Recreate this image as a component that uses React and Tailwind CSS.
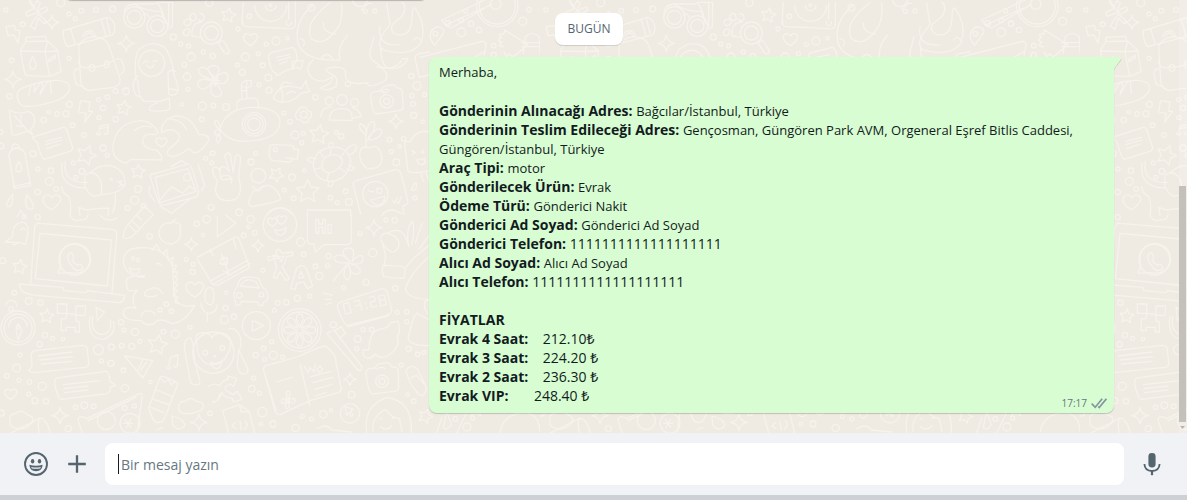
const dots = [
  [18, 30, 6], [182, 8, 12], [68, 73, 7], [207, 42, 6], [226, 56, 6], [244, 32, 7], [288, 30, 7], [338, 27, 9], [207, 175, 6], [35, 181, 7],
  [28, 289, 8], [347, 273, 7], [378, 274, 10], [322, 292, 7], [296, 299, 6], [208, 313, 9], [309, 324, 8], [146, 336, 5], [171, 342, 7], [198, 341, 9],
  [131, 360, 8], [218, 376, 7], [297, 353, 6], [347, 358, 8], [252, 405, 7], [309, 444, 9], [322, 466, 6], [99, 461, 9], [114, 507, 6], [153, 512, 8],
  [148, 544, 12], [113, 576, 8], [169, 567, 7], [220, 489, 6], [246, 514, 9], [227, 532, 6], [2, 438, 9], [2, 396, 7], [520, 111, 9], [542, 132, 6],
  [566, 138, 6], [573, 171, 12], [610, 156, 6], [638, 168, 8], [553, 194, 7], [561, 230, 11], [564, 268, 6], [547, 313, 5], [607, 318, 12], [640, 317, 7],
  [678, 321, 10], [605, 358, 7], [628, 8, 11], [748, 49, 7], [714, 87, 6], [799, 133, 6], [828, 123, 12], [863, 115, 5], [736, 171, 12], [775, 161, 6],
  [712, 195, 6], [727, 217, 9], [788, 196, 7], [805, 233, 10], [777, 254, 6], [807, 271, 9], [851, 339, 6], [870, 365, 7], [885, 405, 12], [910, 400, 6],
  [905, 428, 6], [946, 292, 8], [1044, 252, 8], [1009, 397, 6], [1024, 409, 8], [638, 460, 7], [617, 475, 6], [635, 489, 6], [767, 460, 6], [753, 486, 9],
  [876, 532, 10], [913, 512, 5], [853, 570, 6], [881, 595, 7], [414, 567, 10], [404, 601, 12], [430, 617, 7], [383, 624, 7], [633, 622, 9], [717, 637, 10],
  [991, 593, 7], [1012, 608, 6], [1037, 574, 7], [1047, 606, 10], [934, 23, 10], [1096, 34, 6], [1125, 33, 6], [1234, 228, 8], [1251, 257, 12], [1236, 287, 7],
  [1274, 284, 6], [1239, 312, 7], [1241, 346, 9], [1268, 365, 5], [1169, 419, 7], [1199, 439, 5], [1211, 416, 7], [1174, 455, 6], [1189, 487, 10], [1245, 594, 6],
  [1343, 70, 8], [1384, 61, 7], [1413, 71, 8], [1437, 90, 8], [1384, 97, 13], [1397, 33, 6], [1568, 64, 12], [1587, 29, 7], [1481, 137, 7], [1481, 165, 8],
  [73, 650, 6], [113, 651, 8], [8, 782, 9], [43, 878, 7], [86, 903, 10], [121, 908, 8], [363, 967, 8], [372, 990, 6], [405, 996, 11], [135, 1005, 8],
  [158, 1015, 6], [189, 1017, 5], [119, 1033, 8], [60, 1065, 6], [50, 1104, 12], [295, 1049, 15], [334, 1041, 9], [365, 1037, 7], [395, 1039, 9], [419, 1024, 6],
  [304, 1083, 6], [333, 1090, 9], [370, 1111, 7], [375, 1165, 11], [451, 1146, 5], [20, 1127, 7], [57, 1141, 6], [88, 1146, 7], [127, 1159, 12], [86, 1182, 6],
  [105, 1202, 9], [138, 1204, 8], [227, 1222, 7], [253, 1216, 10], [281, 1219, 7], [205, 1286, 9], [590, 671, 8], [620, 658, 11], [609, 705, 5], [449, 709, 8],
  [559, 778, 6], [579, 793, 6], [578, 816, 8], [752, 658, 11], [745, 681, 5], [731, 706, 7], [764, 698, 7], [902, 726, 12], [911, 763, 7], [789, 811, 6],
  [946, 799, 7], [958, 828, 11], [986, 768, 8], [983, 797, 6], [1118, 758, 12], [1080, 701, 6], [1158, 660, 6], [1184, 661, 8], [679, 878, 5], [677, 924, 8],
  [702, 950, 8], [673, 959, 12], [570, 982, 6], [499, 913, 7], [480, 930, 6], [514, 934, 7], [490, 995, 7], [526, 1003, 12], [833, 909, 7], [859, 907, 8],
  [892, 895, 9], [930, 888, 6], [823, 931, 6], [815, 1025, 6], [791, 1045, 7], [767, 1065, 8], [794, 1078, 6], [820, 1066, 12], [848, 1071, 6], [1031, 863, 6],
  [1098, 847, 9], [1186, 865, 8], [1192, 937, 6], [1220, 935, 7], [1220, 965, 6], [1000, 974, 9], [1089, 989, 6], [1115, 989, 7], [1073, 1017, 10], [1070, 1046, 6],
  [1226, 1047, 8], [1253, 1063, 7], [1272, 1057, 6], [1204, 1095, 6], [761, 1134, 6], [755, 1166, 10], [778, 1180, 6], [787, 1236, 14], [630, 1240, 7], [819, 1272, 9],
  [783, 1272, 5], [887, 1284, 11], [907, 1249, 6], [935, 1257, 6], [970, 1243, 11], [993, 1231, 5], [1055, 1184, 10], [1223, 1184, 5], [1241, 1204, 7], [4, 1239, 9],
  [1366, 1257, 7], [1401, 1281, 12], [1418, 1254, 6],
];

const stars = [
  [371, 324, 23, 10], [259, 466, 31, 20], [414, 515, 22, 5], [685, 46, 23, 10], [957, 404, 30, 8], [923, 575, 36, 0], [829, 524, 23, 30],
  [59, 801, 23, 10], [140, 949, 22, 5], [473, 1035, 31, 10], [1276, 1249, 22, 20], [1428, 1228, 23, 0],
];

const sparkles = [
  [156, 67, 21], [379, 130, 25], [39, 238, 25], [1188, 364, 22], [574, 733, 20], [774, 737, 19], [1122, 683, 25], [180, 1247, 25], [597, 1267, 25], [1050, 1138, 19],
];

const hearts = [
  [752, 118, 21], [485, 427, 16], [156, 606, 26], [585, 868, 26], [33, 1182, 18], [845, 660, 15], [818, 666, 15],
];

const doodles = [
  // ribbon, lightning, milk carton, bread
  'M90 0l15 25-28 12 4 12 38-14-28 42 14 12 10-35 18 18 4-12-20-15 26-14-4-10-30 12 12-24-10-8-10 22-12-16z',
  'M18 80l26-4 2 14 14 3-6 36-12-24-18 2z',
  'M77 112l60-3 4 14-64 2zM77 125l-16 28 74 2 8-32 32 30-40 2 14 74 34-14-10-62M61 153l13 66q2 8 12 8l63 2M98 170q-18 34 0 37 20-3 0-37M146 178l20-12v8l-20 12z',
  'M52 290q-4-22 26-30 76-26 112-16 24 6 18 26-8 24-50 36-56 16-88 12-16-4-18-28M86 288l6-32q14-10 12 6l-2 16 16-26q12-10 10 4l-8 28 22-38q12-6 10 6l2 28',
  // backpack with bedroll
  'M190 92l132-40q20 4 23 30 0 22-12 24l-130 34q-14-12-13-48M212 86l14 48M304 60l14 48M320 58l10 44M250 110a18 18 0 0136 0M257 110a11 11 0 0122 0',
  'M236 138q10-22 40-27 42-4 52 30l32 94q4 24-24 28-40 4-66 8-26-2-28-30zM236 180q0 18 12 22 60 4 94-22M268 198l8-6 8 6v12l-8 6-8-6zM314 186l8-4 4 4v14l-8 4-4-4zM240 206q-20 0-18 16l6 30 18 8M348 178q18-6 22 18 8 20-8 26',
  // astronaut
  'M408 240q-8-90 16-96 32-24 66-4 24 20 32 86 18 40 10 52-16 14-26 4l-2-64q8-12 22-4M412 228q-14 12-12 38l8 20 12 4M414 240q0 52 18 64h50l26-10 2 30q-4 8-20 8-28 4-42-2-4-10 24-22v-4M506 266l26 4',
  'M430 190q6-12 14-4M460 186q6-8 12-2M440 196q12 16 22-2',
  // sunglasses
  'M372 36q4-22 30-24h60l14-5h42l-1 74-10 6M430 44q10-8 18 8M402 12q40 24 82 22l12 36q-10-50-24-60M506 10v70',
  // paw and magnifier
  'M576 108q-2-42 30-42M576 108l24 4M556 60q14-8 18 6-6 14-16 10-12-6-2-16M554 90q12-8 16 2-4 18-16 14-8-8 0-16M578 40q12 0 10 18-12 10-18-4-2-12 8-14M600 42q14-2 12 16-10 10-16 0M655 130q12-16 20 0l14 24q-8 14-16 4z',
  // record player
  'M726 72l4-64M886 6v70q-4 12-20 10l-126-6q-14 0-12-18M764 16a48 48 0 0096 0M796 16a16 16 0 0032 0M866 8v50M860 64a8 8 0 1014 2',
  // flower
  'M640 232q-32-32 0-36 30 2 6 36 40-30 38 4-6 22-38 12 34 38 6 42-26 0-18-40-26 30-40 8-8-24 38-20-46-14-34-32 20-14 42 26M622 240l38 2M640 226l6 32M630 254l24-22',
  // chat and fish
  'M806 172q0-12 8-14l62-16q12 0 16 34l-16 30-18 6-28 16-2-10q-16 0-22-46M830 172l38-8M832 182l38-10M838 192l24-8M876 184l34-2-8 26-10-6-14 4z',
  'M820 292q22-50 84-26l14-24 4 22 8 10-28 6q-20 28-60 26-20-4-22-14M840 262q14 24 6 42M836 272l14-26 24 4M860 282q14-14 26-4',
  // octopus
  'M940 14q-60 50-46 116 20 56 126 50-10-40 22-74M940 180q-30 24-4 54 30 20 60-4 8 20-36 34 20 12 48-4 10-30-18-40-24-12 4-18 50-6 42 26 4 30 68 20-6 20 44-2 34-20-24-60-24-18-10-46l8-30M990 8q-80 60-56 108 40 30 84-40 12-40 6-66M970 68q-2 30 36 34M900 116q20 4 10 22M964 178q14-28 34-2',
  'M1160 10l10 64q-50 58-20 76 80 22 112-20 20-50-16-104-10-10-10 30-4 60-50 46-30-20 18-50 20-30 2-46M1142 138q0 60 26 68 40 2 56-30l-16 0q-20 40-78 24M1140 80q-10 60 60 54M1240 120q10-16 26 4',
  // camera
  'M1112 290q0-12 10-14l20-4q2-12 22-16l18-2q8 10 10 10 12 0 14 8l4 50q-4 10-12 10l-70 10q-10 0-16-52M1144 274q18-12 22-2-8 10-22 2',
  'M1098 1124q0-16 10-18l18-2q4-14 20-14l20-2 10 14q16-4 18 8l2 54q-4 10-12 10l-66 8q-12 0-20-58M1130 1108q14-10 26-2',
  // submarine
  'M660 388q14-60 90-66 84-2 90 40 0 52-80 60-72 10-100-34M712 330q-6-30 12-32l40-4q12 4 12 28M726 294l-2-40q6-16 30-12v16l-16 8 4 30M724 260l18 2M728 272h14M740 242v16M644 364q12-10 18 26-16-8-18-26M644 394q14-12 18 4-16 16-18-4M654 430q14-14 4-26-16 14-4 26',
  // gear and people
  'M902 322l16 0 4 10 12 4 0 14-8 6-2 10-14 2-8-8-12-2-4-14 6-10z',
  'M988 360q0-34 36-34t32 36zM962 350q4-32 34-28M1058 322q20 6 26 28l-24 4',
  // leaf, speech card, notes, bolt
  'M28 330q30 16 56 4 28 10 16 46l-10 10 8 14-14-12q-44 20-48 10zM44 348l42 48M62 366l2-20M74 380l-24-2',
  'M96 412l94-30q8 0 10 6l18 56q0 6-8 10l-78 24q-8-2-20-50zM138 424l46-12M136 434l50-14M140 446l42-14',
  'M296 400l4-22 26-4-4 24M290 398a6 6 0 1012 2M312 398a6 6 0 1012-2M298 386l26-4',
  'M242 302l28 4-4 28 12 0-24 32 4-26-22-4z',
  // heart hands
  'M338 440q10-62 60-74 46-16 74 26 6 10-10 12-32-8-34 20 4 24 42 26 20 20 14 30l-90-2-16 12q-40-10-40-50M404 392q26-20 50-10M484 388q6-30 40-40 50-4 72 56 34-2 30 18-26 40-46 36-10-14-18-10-36 30-56 18-10-8 4-22 38-26 26-42-20-24-50-4zM502 356q40 0 58 32',
  // bottle, drops
  'M26 466q6-20 20-22 26 0 30 22l16 90-48 10zM36 444q0-12 12-12 12 4 8 12M56 484q-16 30 0 32 18-6 0-32M40 560l52-12',
  'M38 582q-26 34-14 38 16 2 14-38M80 584q-8 40 8 44 28 0-8-44M62 630l-10 20M62 630l12 20',
  // dog
  'M186 488q-10 76 70 76M196 484q-10 66 66 64M186 560q0 20 20 30 10 20 4 56M256 562q-10-50 24-42 30 10 24 62-30 18-48-20M270 520q20-24 54-24 48 6 52 54-8 30-76 34M350 546l16-4-8 8 12 4-14 6M346 580q2 40-8 56M236 622l4 24M236 622l24 8 36-4 30-2-2 22',
  // photos
  'M452 524l114-32q10 2 30 82 0 14-12 18l-96 24q-10-2-16-20l-20-60q-2-10 0-12M466 532l98-26 24 68-108 34zM480 600l34-40 34 20 20-22 20 14M514 500l30-18 18 10M594 492l20 64-10 16M480 618l34 22 60-46M450 560l-4 18 18 26',
  // peace hand, person
  'M652 542q-20-26-12-38 14-8 20 10-2-16 14-14l14 14-14-46q12-18 18 0l8 50 6-48q10-12 16 2l-6 60q14 50-10 66-50 16-60-28zM660 516q0 26 10 24l24-4M664 530q20-10 32 4l-2 14',
  'M746 612q4-36 22-42l22-12 16-2q30 10 36 42-20 10-86 22zM758 558q16 30 32 0',
  // video camera, turtle, plant
  'M810 442q0-8 10-8l56 2q8 4 6 12l14 0-4 30-14-2q-4 10-14 10l-46-4q-16-4-8-40M860 474l20 2',
  'M940 500q0-50 52-58 50-4 60 40-4 54-56 62-48 0-56-44M966 490q6-26 40-26 34 10 14 36-30 30-48 12-8-10-6-22M986 440q0-18 14-10v12M1038 450q20-24 32-10-2 20-22 24M1046 494l18 10-10 8-14-4M1000 546l-4 14-12-2 2-16M942 492l-20-12 6-8 20 4M970 472l-10-16M990 464l4-22M1020 476l12-18M962 504l-20 4M986 518l-4 22M1018 504l22 14',
  'M1108 444q-20-10-28 10-6 30 20 50 40 8 46-26-4-50-38-34M1098 444q-4-80 24-80 8 20-16 52M1104 414q30-40 42-22-4 28-44 28M1096 404q-24-20-16-32 14 0 20 24',
  // ice pop, laughing chat
  'M1290 396q-40-10-60 30-20-10-14 22l8 66q10 8 66-2M1262 518l8 26M1278 516l8 26M1236 452l10 6-8 4M1272 450l-8 6 8 4M1250 480l26-4q0 18-12 18-12 0-12-16',
  'M1060 556q-2-12 10-14l118-34q12 2 16 16l20 80q0 12-16 14l4 24M1060 556l22 86M1104 570q8 8 18 4M1112 600l42-12q0 30-24 26-12-2-18-14M1178 600l6 10 8-18M1192 606l4 4 8-20M1146 646q20-30 60-4M922 646v-16h130v16M800 644q40-40 80 0M1246 180q-2-16 8-18l36-6M1246 180l12 52 32-8M1084 30l20-20 10 0M1234 570q10-24 14-22 4 20-6 24z',
  // pizza, pin, person badge, whale
  'M1325 60l130-60M1325 60q10 20 30 24l120-72M1340 74l110-50M1390 190l60-34M1260 172l186-48q14 0 12 12l-6 30M1304 136q-30-36 6-56 34 4 14 28z',
  'M1510 140q-20 0-4-14-20-4-2-14-14-12 8-10l2-12 70 44-44 36-12-8-8 8-8-14M1570 160l6-50q20-20 42 0l2 50M1566 128h60M1566 140h60',
  // laptop
  'M92 852l12-170q2-14 16-12l218 18q12 2 12 16l-14 174M106 836l14-136 214 20-12 138zM58 852l130 10 4 10 66 6 4-6 112 14q-2 20-16 22l-250-22q-50-4-50-34',
  'M174 820l8-22q-12-60 40-68 52 4 50 54-10 42-62 34zM206 760l8-2 8 14-6 10 16 14 10-4 8 14q-14 12-28 0-26-26-16-46',
  // bell, pencil, apple
  'M16 726l20-14 4-24q10-24 32-20 14 4 12 34l-8 32-14-6zM62 690q6-10 16 0M38 732q8 6 16-4',
  'M384 674l50-56 26 26-54 56q-20 20-36 14 0-24 14-40M398 664l22 22M388 676l20 20M412 648l12 12M540 686q8 36-24 46-44-4-38-42 14-26 30-20 12-10 34 4zM514 672q2-10 14-14M210 650q10 14 30 10 24 0 24-16M300 646q24 24 50 8',
  // dinosaur
  'M432 832q-54 0-62-46 0-36 40-42 80-10 108 54l4 90q14 40 62 28-30 54-70 54-40-20-50 0-30 10-40-8-58 0-54-26 10-22 38-10-20-30 4-56-40 10-30-18M378 850q-4-26 56-22M388 802q10 10 30 4 4 14-12 16-14-2-18-20M468 792q8-6 16 4M488 880q-12-20-30-16-30 10-24 22 20 8 36 0M424 950q0-16 20-18 24 4 20 14',
  'M456 750l14-16 10 18M488 762l12-14 4 22M504 780l16-8-4 20M516 796l14 0-8 18M520 816l14 0-10 16 10 2-10 16 10 4-12 14 10 4-12 14 14 6-10 14 10 4',
  // paper plane, chocolate, love chat
  'M652 650v60l56-40-30-24M592 772l112-60q12-2 14 8l30 78q0 8-12 12l-84 46q-10 2-16-6l-44-72M640 768l-10-20M634 842l110-62M640 852l110-62M686 820l-22-58M662 780l20-6-2 20-20-4M690 826l-20-14M700 716l8 30',
  'M824 688q20 8 34-6 0 22-16 24-16-2-18-18M922 646v76q2 12 20 10l4 24 26-22h70q14-2 12-20v-68M948 658v42h8v-18h12v18h8v-42h-8v14h-12v-14zM984 674h10v26h-10z',
  // translate, clover, hand
  'M802 772l28-8-2-14 10-2 8 12 32-4 0 10-18 4q-6 24-14 30l22 36-10 6-18-28-10 22-10-4 10-32-10-30 16-2 8 18 8-18-46 14zM872 866l18-62q20-14 28 0l20 54-16 8-10-20-22 4-4 18zM896 834l6-20 10 18z',
  'M1000 842l46-54q-44 4-44-16 20-20 48 14-32-30-14-40 36-10 20 38 30-30 34-8-4 22-40 14 40 14 28 30-26 10-34-30 16 40-2 50-20-10 0-48M1142 718q0-20 20-18 40 10 34 40-10 20-24 14-20-10-30-36M1162 700q50-30 64 40M1226 740q-10-50 10-76 10 10 0 70M1246 730l20-60M1258 746l30-40M1146 810l4-14q60 0 66 8l-4 30q-30 4-62-6zM1152 796q10-30-4-60M1220 800q20-30 70-66M1290 768q-60 50-74 100 10 30 74 30',
  // car, mic, refresh
  'M712 860q6-30 24-28 20-4 40 4l12 26q20 10 14 40l-12 4-2 10-12 0-2-10-50-2-4 10-12 2-2-10q-10-30 6-46M720 858l14-16q20-6 34 4l10 18zM616 904q-4-40 12-42 18 0 12 38-4 26-24 4M602 910q6 30 26 30 22-2 24-26M622 940v24M270 948q-10 70 40 70 40-14 30-54M278 950q-8 52 32 54 30-12 20-44M288 922l26 14-22 26z',
  // creeper, compass
  'M172 912h28v28h-28zM228 918h28v28h-28zM200 940l28 4v20h10v32h-12v-14h-28v10h-14v-36h14zM26 980a28 28 0 1156 0M18 916a16 16 0 1132 2M48 990l6-20 12 20-12 30z',
  // monkey
  'M590 1030q-10-30 20-32 20 0 26 16 8-18 36-14 36 14 10 64-20 40-64 26-26-14-28-60M632 1086q14 10 32-2 0 20-14 22-16-2-18-20M556 1060q-10-40 14-46 10 0 14 70l16 60q0 12-14 10-14 2-16-14zM686 988q20-10 34 20 6 30-4 50M716 1050l28 58q0 16-14 14-16-2-18-30z',
  // digital clock
  'M1012 920q0-10 10-14l124-40q12 0 16 12l14 54q-4 12-14 14l-120 30q-12-2-30-56M1040 974l6 6 118-32-2-8',
  'M1030 912l16-4 8 30-18 4zM1062 904l16-4 8 30M1066 918l16-4M1096 908l2 4M1100 922l2 4M1108 892l14-4 4 14-16 6 6 14 14-4M1136 888l16-4 8 30-18 4zM1140 902l16-4',
  // croissant, toothbrush, jar
  'M1090 1048q20 8 18-10 0-46 40-52 20-4 22-18l24-4q10 34-2 44 10 30-20 54-30 20-46 0-20 24-36 4zM980 1000l22-10 84 110q0 16-12 10zM1004 992l20-12 12 20-18 16M970 878l26 8M974 898l20 0M978 914l16-6M1250 940l40 20M1246 944q-10 16-22 72 10 24 66 20M1290 900q-30 0-8 40',
  // message cards
  'M86 1112l10-14-2-30q0-14 10-16l144-16q12 0 14 12l4 42q0 10-10 12l-156 16zM116 1068l100-12M120 1080l98-10M124 1092l92-8M164 1152q-2-16 8-18l146-20q10 0 12 30l16 12-16 6 0 10q-4 8-14 10l-132 16q-10 0-20-46M190 1154l110-12M192 1166l72-8M194 1178l70-8',
  // plane, notes, tube, shuffle
  'M374 1068l84 14-30 52zM428 1080l-16 34M440 1086l-18 24M506 1100l4-26 24-10-2 32M500 1100a6 6 0 1012 2M522 1096a6 6 0 1012-2M446 1224l34-92q4-10 54 18l-34 90-12 24q-20 10-30-8zM470 1170l48 20M460 1198l48 16M452 1222l40 16M480 1134l14 14 10-10 10 16 12-10',
  'M624 1160q20-14 36-2 4-16 24-20l0-10 26 8-10 24-8-8q-20 4-16 18l24 14 12-10 14 24-26 8-2-10q-30-4-32-20-10 30-26 28M640 1208q16-6 20-26',
  // open book
  'M790 1108q0-10 12-12l98-28q60-30 78-30l26 28 20 100q0 8-10 12l-84 24-90 42q-10 2-16-14zM900 1092l30 124M794 1120l34 112M830 1146l46-14M914 1100l10 18 6-16 12 14 4-22M950 1108l10-10 8 10-10 10zM932 1130l60-16M938 1148l60-16M944 1168l52-14M946 1188l32-10',
  'M864 1200q-10-24 0-28 12 4 0 28 20-10 22 2-4 14-22 2 10 20-2 22-14-4 2-22-20 14-20-2 4-12 20 0',
  // cheese, cloud, page
  'M260 1256q-24-14-26 6l14 40M260 1256l160-76q8 0 6 10l-14 108M264 1262l144-70M30 1262q-4-20 16-22 20-14 36 4 22 6 14 24-20 26-52 16-20-6-14-22M536 1222q0-20 20-18 16-18 34 0 24 0 20 20-20 20-60 16-16-4-14-18M516 1248q40 10 38 30-20 20-36-4zM668 1232l50-18 30 20 16 66M668 1232l18 68M718 1214l6 22 24-2M706 1268l-10 10 12 8M736 1262l6 12-8 14M720 1264l4 26',
  // slipper, face, pointer
  'M1218 1110q14-20 34-4 20 40 28 60-8 30-24 16-30-30-38-72M1230 1134l20-8 20 24M1100 1298q-12-80 60-106 80 10 74 110M1120 1296q-10-40 36-68 20 26 42 28l8 40M1140 1256h6M1176 1254h6M1142 1280q20 16 34-4M1036 1220l24 8-8 6 8 12-6 4-8-12-6 8zM950 1286l20-8q20 0 24 12l60 6M118 1300q-10-50 10-44 20 20 22 44M30 1300l90-46M470 1290l18-8',
  // bottom edge pieces beyond the first panel
  'M1500 1298q10-60 80-60 40 10 40 60M1310 1298l16-46M1370 1298l40-80M1340 1232l-10 50q10 14 24-8z',
  'M370 1270l28 0M376 1258l16 24M392 1256l-14 28',
];

const rings = [
  [403, 52, 32], [403, 52, 21], [472, 78, 31], [472, 78, 20], [634, 99, 33], [634, 99, 21], [455, 190, 39], [643, 243, 10], [811, 16, 4], [762, 373, 35],
  [762, 373, 19], [762, 373, 28], [911, 344, 10], [1160, 304, 20], [1160, 304, 9], [1026, 300, 16], [988, 303, 12], [1064, 308, 12], [562, 532, 11], [775, 527, 22],
  [826, 449, 6], [334, 538, 3], [1126, 582, 38], [1138, 572, 8], [840, 674, 50], [223, 779, 46], [399, 775, 5], [414, 780, 5], [672, 783, 11], [718, 886, 8],
  [784, 884, 7], [769, 977, 42], [899, 990, 64], [899, 990, 54], [54, 984, 51], [54, 984, 42], [54, 982, 5], [33, 927, 7], [616, 1058, 7], [667, 1044, 7],
  [644, 1069, 2], [1146, 1144, 19], [1146, 1144, 9], [1050, 1240, 29], [319, 1262, 27], [390, 1270, 30], [374, 1224, 7], [403, 1218, 6], [862, 1202, 6],
  [640, 1058, 62], [1492, 18, 62], [1492, 18, 54], [1487, 12, 16], [1306, 101, 7], [1080, -2, 22],
];

function starPath([cx, cy, r, turn]) {
  const points = Array.from({ length: 10 }, (_, i) => {
    const a = ((i * 36 + turn - 90) * Math.PI) / 180;
    const d = i % 2 ? r * 0.48 : r;
    return `${(cx + d * Math.cos(a)).toFixed(1)} ${(cy + d * Math.sin(a)).toFixed(1)}`;
  });
  return `M${points.join('L')}z`;
}

const sparklePath = ([x, y, r]) =>
  `M${x} ${y - r}q2 ${r - 4} ${r} ${r}q${4 - r} 2 ${-r} ${r}q-2 ${4 - r} ${-r} ${-r}q${r - 4} -2 ${r} ${-r}z`;

const heartPath = ([x, y, r]) =>
  `M${x} ${y - r * 0.5}C${x + r * 0.4} ${y - r * 1.2} ${x + r * 1.3} ${y - r * 0.6} ${x + r * 0.9} ${y}Q${x + r * 0.6} ${y + r * 0.5} ${x} ${y + r * 0.9}Q${x - r * 0.8} ${y + r * 0.5} ${x - r} ${y}C${x - r * 1.2} ${y - r * 0.8} ${x - r * 0.4} ${y - r * 1.1} ${x} ${y - r * 0.5}z`;

function Wallpaper() {
  return (
    <svg className="absolute inset-0 h-full w-full" aria-hidden="true">
      <defs>
        <pattern id="doodles" width="540" height="640" patternUnits="userSpaceOnUse">
          <g transform="scale(0.33333)" fill="none" stroke="#f6f3ed" strokeWidth="3.8" strokeLinejoin="round" strokeLinecap="round">
            {dots.map(([x, y, r], i) => <circle key={i} cx={x} cy={y} r={r} />)}
            {rings.map(([x, y, r], i) => <circle key={i} cx={x} cy={y} r={r} />)}
            {stars.map((s, i) => <path key={i} d={starPath(s)} />)}
            {sparkles.map((s, i) => <path key={i} d={sparklePath(s)} />)}
            {hearts.map((h, i) => <path key={i} d={heartPath(h)} />)}
            {doodles.map((d, i) => <path key={i} d={d} />)}
            <path d="M757 962v32l34-18z" />
            {[0, 45, 90, 135, 180, 225, 270, 315].map((a) => (
              <path key={a} d="M899 982l-10-24q0-16 10-16t10 16z" transform={`rotate(${a} 899 990)`} />
            ))}
          </g>
        </pattern>
      </defs>
      <rect width="100%" height="100%" fill="url(#doodles)" />
    </svg>
  );
}

const details = [
  ['Gönderinin Alınacağı Adres:', 'Bağcılar/İstanbul, Türkiye'],
  ['Gönderinin Teslim Edileceği Adres:', 'Gençosman, Güngören Park AVM, Orgeneral Eşref Bitlis Caddesi, Güngören/İstanbul, Türkiye'],
  ['Araç Tipi:', 'motor'],
  ['Gönderilecek Ürün:', 'Evrak'],
  ['Ödeme Türü:', 'Gönderici Nakit'],
  ['Gönderici Ad Soyad:', 'Gönderici Ad Soyad'],
  ['Gönderici Telefon:', '1111111111111111111'],
  ['Alıcı Ad Soyad:', 'Alıcı Ad Soyad'],
  ['Alıcı Telefon:', '1111111111111111111'],
];

const prices = [
  ['Evrak 4 Saat:', '    212.10₺'],
  ['Evrak 3 Saat:', '    224.20 ₺'],
  ['Evrak 2 Saat:', '    236.30 ₺'],
  ['Evrak VIP:', '       248.40 ₺'],
];

const isNumber = (value) => /^\d+$/.test(value);

function Message() {
  return (
    <article className="relative mt-3 w-full max-w-[685px] self-end whitespace-pre-wrap rounded-lg rounded-tr-none bg-[#d9fdd3] px-[10px] pb-2 pt-[6px] text-sm leading-[19px] text-[#111b21] shadow-[0_1px_1px_rgba(11,20,26,0.2)]">
      <svg className="absolute -right-2 top-0 h-[13px] w-2" viewBox="0 0 8 13" aria-hidden="true">
        <path d="M0 13V1h5.8C7.3 1 7.9 2.2 7 3.3z" fill="#0b141a" opacity="0.18" />
        <path d="M0 12V0h5.8C7.3 0 7.9 1.2 7 2.3z" fill="#d9fdd3" />
      </svg>
      <p className="text-[13px] leading-[19px]">Merhaba,</p>
      <div className="mt-[19px]">
        {details.map(([label, value]) => (
          <p key={label}>
            <strong>{label}</strong>{' '}
            <span className={isNumber(value) ? 'text-sm leading-none' : 'text-[13px] leading-none'}>{value}</span>
          </p>
        ))}
      </div>
      <p className="mt-[19px] font-bold">FİYATLAR</p>
      {prices.map(([label, value]) => (
        <p key={label}><strong>{label}</strong>{value}</p>
      ))}
      <div className="absolute bottom-1 right-[7px] flex items-center gap-1 text-[10px] leading-3 text-[#667781]">
        <time>17:17</time>
        <svg className="h-[11px] w-4" viewBox="0 0 16 11" fill="none" stroke="#8696a0" strokeWidth="1.7" role="img" aria-label="İletildi">
          <path d="M.7 5.7l3.5 3.6L11.2.8M7.2 8.5l1 1L15.4.8" />
        </svg>
      </div>
    </article>
  );
}

function Composer() {
  return (
    <footer>
      <form className="flex items-center bg-[#f0f2f5] py-[10px] pl-6 pr-[23px] text-[#54656f]" onSubmit={(e) => e.preventDefault()}>
        <button type="button" aria-label="Emoji" className="mr-[18px] shrink-0">
          <svg className="h-6 w-6" viewBox="0 0 24 24" fill="none">
            <circle cx="12" cy="12" r="11" stroke="currentColor" strokeWidth="1.9" />
            <ellipse cx="8.6" cy="9.2" rx="1.7" ry="2.2" fill="currentColor" />
            <ellipse cx="15.5" cy="9.2" rx="1.7" ry="2.2" fill="currentColor" />
            <path d="M5.3 12.8q6.7 1.8 13.4 0Q18 19.2 12 19.2T5.3 12.8z" fill="currentColor" />
            <path d="M7 15q5 1 10 0l-1 1.5q-4 .7-8 0z" fill="#f0f2f5" />
          </svg>
        </button>
        <button type="button" aria-label="Ekle" className="mr-[17px] shrink-0">
          <svg className="h-[22px] w-[22px]" viewBox="0 0 22 22" fill="none" stroke="currentColor" strokeWidth="2.3">
            <path d="M2.2 11h17.6M11 2.2v17.6" />
          </svg>
        </button>
        <div className="relative min-w-0 flex-1">
          <input
            type="text"
            aria-label="Bir mesaj yazın"
            placeholder="Bir mesaj yazın"
            className="h-[42px] w-full rounded-lg bg-white px-4 text-sm text-[#3b4a54] caret-transparent outline-none placeholder:text-[#667781]"
          />
          <span className="absolute left-[13px] top-[11px] h-5 w-px bg-[#111b21]" aria-hidden="true" />
        </div>
        <button type="button" aria-label="Sesli mesaj" className="ml-4 shrink-0">
          <svg className="h-6 w-6" viewBox="0 0 24 24" fill="none">
            <rect x="8.4" y="1" width="7.2" height="14.5" rx="3.4" fill="currentColor" />
            <path d="M4.4 12q.4 7 7.6 7t7.6-7" stroke="currentColor" strokeWidth="1.8" />
            <path d="M12 19v4.2" stroke="currentColor" strokeWidth="2.2" />
          </svg>
        </button>
      </form>
      <div className="h-[5px] bg-[#cdd1d5]" />
    </footer>
  );
}

export default function App() {
  return (
    <div className="flex h-screen flex-col font-['Open_Sans','Noto_Sans',sans-serif]">
      <main className="relative flex min-h-0 flex-1 overflow-hidden bg-[#efeae2]">
        <Wallpaper />
        <div className="relative flex min-w-0 flex-1 flex-col justify-end pb-5 pl-16 pr-[65px]">
          <div className="h-8 w-[364px] shrink-0 rounded-lg bg-white shadow-[0_1px_1px_rgba(11,20,26,0.25)]" />
          <div className="mt-[13px] self-center rounded-lg bg-white px-3 py-[6px] text-xs leading-5 text-[#54656f] shadow-[0_1px_1px_rgba(11,20,26,0.15)]">
            BUGÜN
          </div>
          <Message />
        </div>
        <div className="relative flex w-2 flex-col items-start justify-end gap-1 bg-white/20 pb-1">
          <div className="h-[236px] w-[7px] bg-[#c4c0ba]" />
          <svg className="h-[3px] w-[7px]" viewBox="0 0 7 3" aria-hidden="true">
            <path d="M1 0h5L3.5 3z" fill="#b8b4ae" />
          </svg>
        </div>
      </main>
      <Composer />
    </div>
  );
}
